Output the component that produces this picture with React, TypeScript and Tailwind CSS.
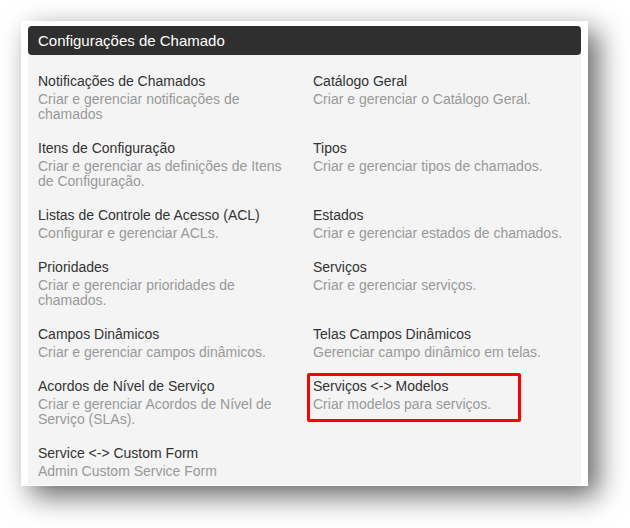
import React from 'react';

interface ConfigItem {
  title: string;
  desc: string;
  highlight?: boolean;
}

const items: ConfigItem[] = [
  { title: 'Notificações de Chamados', desc: 'Criar e gerenciar notificações de chamados' },
  { title: 'Catálogo Geral', desc: 'Criar e gerenciar o Catálogo Geral.' },
  { title: 'Itens de Configuração', desc: 'Criar e gerenciar as definições de Itens de Configuração.' },
  { title: 'Tipos', desc: 'Criar e gerenciar tipos de chamados.' },
  { title: 'Listas de Controle de Acesso (ACL)', desc: 'Configurar e gerenciar ACLs.' },
  { title: 'Estados', desc: 'Criar e gerenciar estados de chamados.' },
  { title: 'Prioridades', desc: 'Criar e gerenciar prioridades de chamados.' },
  { title: 'Serviços', desc: 'Criar e gerenciar serviços.' },
  { title: 'Campos Dinâmicos', desc: 'Criar e gerenciar campos dinâmicos.' },
  { title: 'Telas Campos Dinâmicos', desc: 'Gerenciar campo dinâmico em telas.' },
  { title: 'Acordos de Nível de Serviço', desc: 'Criar e gerenciar Acordos de Nível de Serviço (SLAs).' },
  { title: 'Serviços <-> Modelos', desc: 'Criar modelos para serviços.', highlight: true },
  { title: 'Service <-> Custom Form', desc: 'Admin Custom Service Form' },
];

export default function App() {
  return (
    <div className="w-[630px] h-[528px] bg-white pt-[21px] pl-[21px] [font-family:Liberation_Sans,Arial,sans-serif]">
      <div className="w-[567px] h-[465px] bg-white pt-[5px] pl-[7px] shadow-[10px_10px_26px_rgba(0,0,0,0.6)]">
        <div className="w-[553px] h-[459px] bg-[#f4f4f4] flex flex-col">
          <div className="h-[29px] flex items-center pl-[10px] pt-[1px] rounded-[4px] bg-[#2f2f2f] text-white text-[15px]">
            Configurações de Chamado
          </div>
          <div className="grid grid-cols-[250px_1fr] gap-x-[25px] gap-y-[17px] px-[10px] pt-[17px]">
            {items.map((item) => (
              <div key={item.title} className="relative">
                <div className="text-[14px] leading-[18px] text-[#333333]">{item.title}</div>
                <div className="mt-[2px] text-[14px] leading-[15px] text-[#999999]">{item.desc}</div>
                {item.highlight && (
                  <div className="absolute -top-[4px] -left-[6px] w-[214px] h-[49px] border-[3px] border-[#ff0000] rounded-[2px]" />
                )}
              </div>
            ))}
          </div>
        </div>
      </div>
    </div>
  );
}
